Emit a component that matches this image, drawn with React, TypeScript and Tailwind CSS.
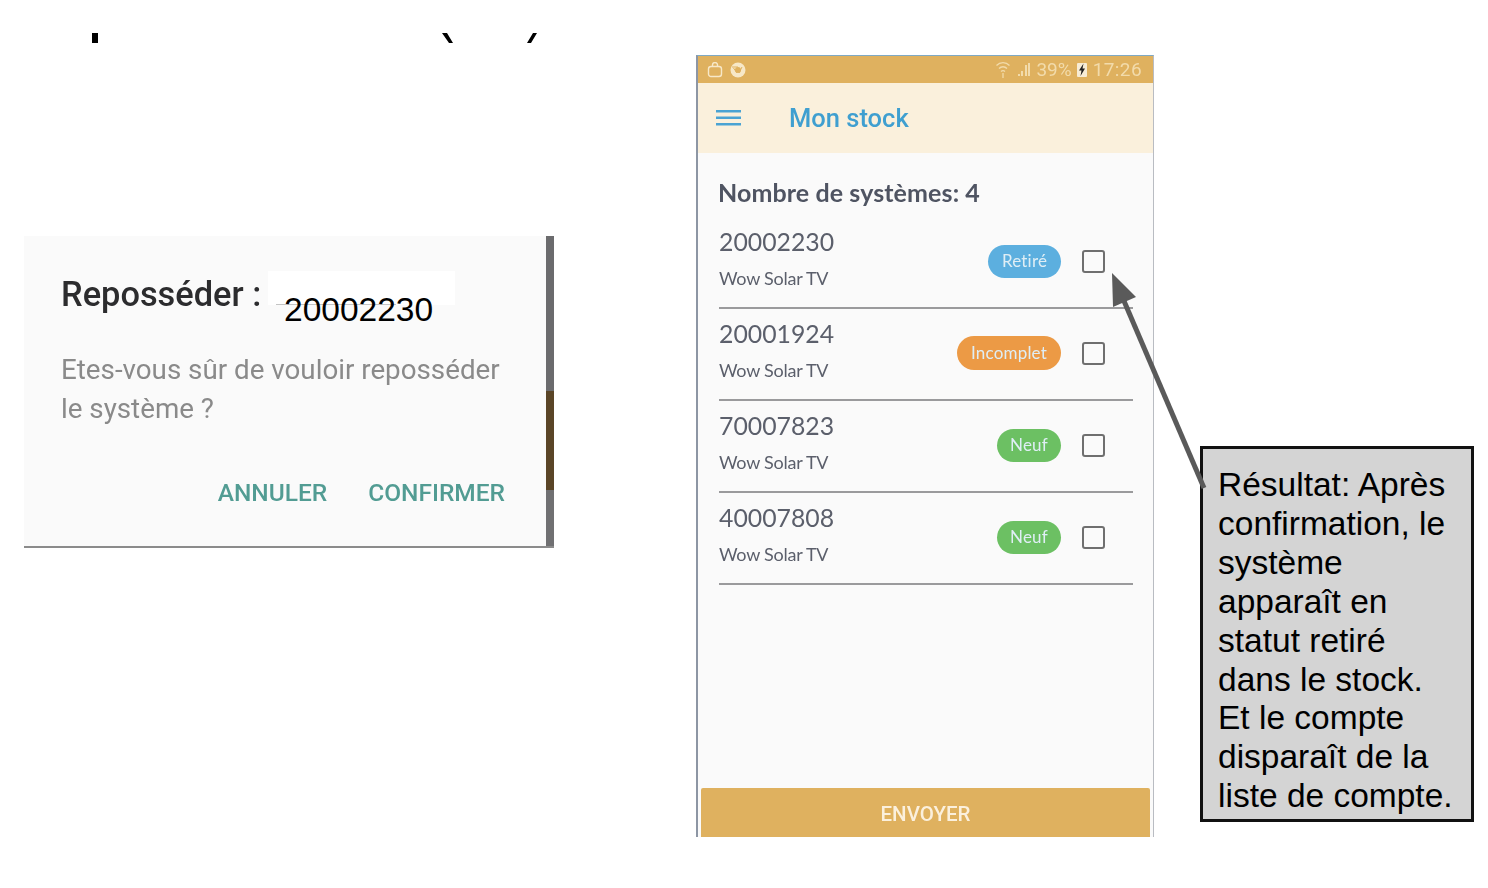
const stock = [
  { id: '20002230', label: 'Retiré', badge: 'bg-[#5cafdf] w-[73px] h-[33px]' },
  { id: '20001924', label: 'Incomplet', badge: 'bg-[#ec9a45] w-[104px] h-[34px]' },
  { id: '70007823', label: 'Neuf', badge: 'bg-[#6cc063] w-[64px] h-[33px]' },
  { id: '40007808', label: 'Neuf', badge: 'bg-[#6cc063] w-[64px] h-[33px]' },
]

const noteLines = ['Résultat: Après', 'confirmation, le', 'système', 'apparaît en', 'statut retiré', 'dans le stock.', 'Et le compte', 'disparaît de la', 'liste de compte.']

const StatusBar = () => (
  <div className="h-[27px] shrink-0 bg-[#dfb15f] flex items-center pl-[9px] pr-[11px] text-[#f2dbab] font-['Roboto',sans-serif] text-[19px] leading-none">
    <svg width="16" height="16" viewBox="0 0 16 16" fill="none" stroke="#f7e8c8" strokeWidth="1.4">
      <rect x="1.5" y="4.5" width="13" height="10" rx="2.5" />
      <path d="M5.5 4.5V3a2.5 2.5 0 0 1 5 0v1.5" />
    </svg>
    <svg width="16" height="16" viewBox="0 0 16 16" className="ml-[7px]">
      <circle cx="8" cy="8" r="7.5" fill="#f7e8c8" />
      <circle cx="8" cy="8" r="3" fill="#dfb15f" />
      <path d="M2 5h6M9 11l3-6M7 11 3.5 6" stroke="#dfb15f" strokeWidth="1" />
    </svg>
    <svg width="16" height="18" viewBox="0 0 16 18" className="ml-auto" fill="none" stroke="#f2dbab" strokeWidth="1.3">
      <path d="M1.5 4.5a9 9 0 0 1 13 0M4 7.5a5.5 5.5 0 0 1 8 0M6 10.5a3 3 0 0 1 4 0" />
      <path d="M8 12v5" />
    </svg>
    <svg width="16" height="16" viewBox="0 0 16 16" className="ml-[5px]" fill="#f2dbab">
      <path d="M2 14h2v-2H2zM5 14h2V9H5zM9 14h2V3H9zM12 14h2V1h-2z" />
    </svg>
    <span className="ml-[4px]">39%</span>
    <svg width="12" height="16" viewBox="0 0 12 16" className="ml-[4px]">
      <rect x="1" y="1" width="10" height="14" rx="1" fill="#f7ecd5" />
      <path d="M7.5 1.5 3 8.5h2.5L4.5 14 9 6.5H6.5z" fill="#222" />
    </svg>
    <span className="ml-[5px] tracking-[0.4px]">17:26</span>
  </div>
)

const StockRow = ({ id, label, badge }: { id: string; label: string; badge: string }) => (
  <div className="h-[92px] shrink-0 border-b-2 border-[#9a9a9c] flex items-center ml-[21px] mr-[20px]">
    <div className="flex-1 -mt-[10px] text-[#5b5f6b] font-['Lato',sans-serif]">
      <div className="text-[24.8px] leading-[32px] h-[32px]">{id}</div>
      <div className="text-[18px] leading-[22px] mt-[9px] tracking-[-0.25px]">Wow Solar TV</div>
    </div>
    <div className={`${badge} -mt-[2px] rounded-full flex items-center justify-center text-[#dfeef5] text-[17px] font-['Lato',sans-serif] tracking-[0.2px]`}>
      {label}
    </div>
    <div className="w-[23px] h-[23px] -mt-[2px] ml-[21px] mr-[28px] rounded-[3px] border-2 border-[#6f6f6f] bg-[#fafafa]" />
  </div>
)

export default function App() {
  return (
    <div className="relative w-[1488px] h-[888px] overflow-hidden bg-white flex items-start font-['Liberation_Sans',sans-serif]">
      {/* bottoms of the cut off slide title */}
      <svg width="460" height="14" viewBox="0 0 460 14" className="absolute left-[85px] top-[32px]" fill="#000">
        <rect x="7" y="1" width="6" height="10" />
        <path d="M357 1h5l6 10h-4zM448 1h4l-6 10h-4z" />
      </svg>

      {/* dialog */}
      <div className="relative mt-[236px] ml-[24px] w-[530px] h-[312px] flex bg-[#fafafa] border-b-2 border-[#8b8b8b]">
        <div className="flex-1 pl-[37px] pr-[41px] font-['Roboto',sans-serif] blur-[0.4px]">
          <div className="text-[34.4px] leading-[40px] mt-[38px] font-medium text-[#2c2c2e] whitespace-nowrap">Reposséder :</div>
          <div className="text-[27.75px] leading-[39px] mt-[36px] text-[#8a8a8a] whitespace-nowrap">
            Etes-vous sûr de vouloir reposséder
            <br />
            le système ?
          </div>
          <div className="flex justify-end gap-[41px] mt-[50px] text-[24.5px] leading-[30px] font-medium text-[#529c93]">
            <span>ANNULER</span>
            <span>CONFIRMER</span>
          </div>
        </div>
        <div className="w-[8px] flex flex-col">
          <div className="h-[155px] bg-[#6b6b6d]" />
          <div className="h-[99px] bg-[#5a4527]" />
          <div className="flex-1 bg-[#707072]" />
        </div>
        <div className="absolute left-[244px] top-[35px] w-[187px] h-[34px] bg-white" />
        <div className="absolute left-[252px] top-[68px] w-[120px] h-px bg-[#c4c4c4]" />
        <div className="absolute left-[260px] top-[54px] text-[33.5px] leading-[39px] text-black font-['Liberation_Sans',sans-serif]">20002230</div>
      </div>

      {/* phone */}
      <div className="ml-[142px] mt-[55px] w-[458px] h-[782px] flex flex-col bg-[#fafafa] border-t border-[#7fa9c4] border-l-2 border-l-[#8d96a4] border-r border-r-[#b9bcc2] blur-[0.4px]">
        <StatusBar />
        <div className="h-[70px] shrink-0 bg-[#faf0dc] flex items-center pl-[18px]">
          <svg width="25" height="18" viewBox="0 0 25 18" fill="#4aa3d3">
            <rect width="25" height="2.5" y="1" />
            <rect width="25" height="2.5" y="7.5" />
            <rect width="25" height="2.5" y="14" />
          </svg>
          <div className="ml-[48px] mt-[2px] text-[25.5px] leading-none font-medium text-[#3f9fd0] font-['Roboto',sans-serif]">Mon stock</div>
        </div>
        <div className="text-[25px] leading-[30px] font-bold tracking-[0.1px] text-[#4f5462] font-['Lato',sans-serif] ml-[20px] mt-[24px] h-[28px] shrink-0">
          Nombre de systèmes: 4
        </div>
        <div className="flex flex-col mt-[12px]">
          {stock.map((row) => (
            <StockRow key={row.id} {...row} />
          ))}
        </div>
        <div className="mt-auto mx-[3px] h-[49px] pt-[4px] bg-[#dfb15f] rounded-t-[2px] flex items-center justify-center text-[20.5px] font-medium text-[#fbf0dd] font-['Roboto',sans-serif]">
          ENVOYER
        </div>
      </div>

      {/* note */}
      <div className="ml-[46px] mt-[446px] w-[274px] h-[376px] shrink-0 bg-[#d4d4d4] border-[3px] border-[#111] pl-[15px] pt-[17px] text-[33.5px] leading-[38.9px] text-black whitespace-nowrap">
        {noteLines.map((line) => (
          <div key={line}>{line}</div>
        ))}
      </div>

      {/* arrow from the note to the checkbox */}
      <svg width="110" height="230" viewBox="1100 265 110 230" className="absolute left-[1100px] top-[265px]">
        <path d="M1204 488 1124 301" stroke="#5a5a5a" strokeWidth="5" />
        <path d="M1112 273 1136 297 1113 307z" fill="#5a5a5a" />
      </svg>
    </div>
  )
}
